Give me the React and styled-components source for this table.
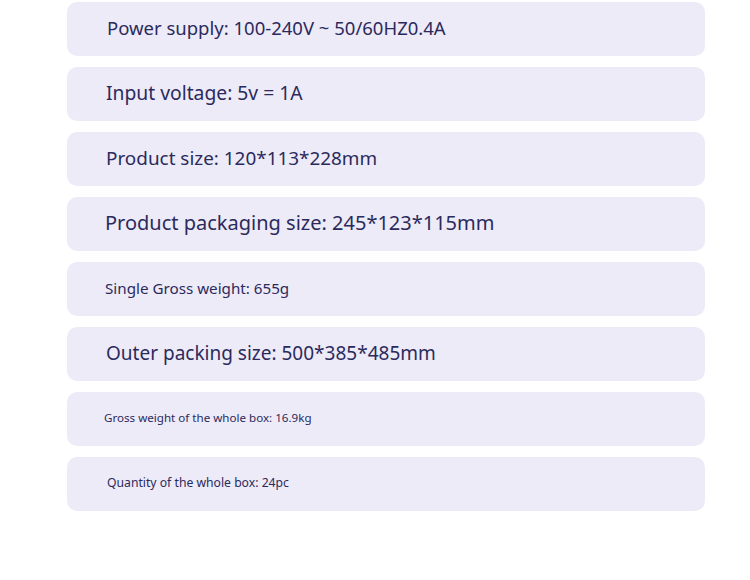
import React from "react";
import styled, { createGlobalStyle } from "styled-components";

const GlobalStyle = createGlobalStyle`
  body {
    margin: 0;
    background: #ffffff;
    font-family: "Noto Sans", "Open Sans", sans-serif;
  }
`;

const List = styled.div`
  display: flex;
  flex-direction: column;
  gap: 11px;
  width: 638px;
  padding: 2px 0 0 67px;
`;

const Row = styled.div`
  box-sizing: border-box;
  height: 54px;
  display: flex;
  align-items: center;
  padding: 0 0 3px ${(props) => props.indent}px;
  background: #eeebf8;
  border-radius: 10px;
  color: #2b2a5c;
  font-size: ${(props) => props.size}px;
  white-space: nowrap;
`;

const specs = [
  { text: "Power supply: 100-240V ~ 50/60HZ0.4A", size: 18.5, indent: 40 },
  { text: "Input voltage: 5v = 1A", size: 19.3, indent: 39 },
  { text: "Product size: 120*113*228mm", size: 18.9, indent: 39 },
  { text: "Product packaging size: 245*123*115mm", size: 20, indent: 38 },
  { text: "Single Gross weight: 655g", size: 15.2, indent: 38 },
  { text: "Outer packing size: 500*385*485mm", size: 19, indent: 39 },
  { text: "Gross weight of the whole box: 16.9kg", size: 11.6, indent: 37 },
  { text: "Quantity of the whole box: 24pc", size: 12.2, indent: 40 },
];

export default () => {
  return (
    <>
      <GlobalStyle />
      <List>
        {specs.map((s) => (
          <Row key={s.text} size={s.size} indent={s.indent}>
            {s.text}
          </Row>
        ))}
      </List>
    </>
  );
};
